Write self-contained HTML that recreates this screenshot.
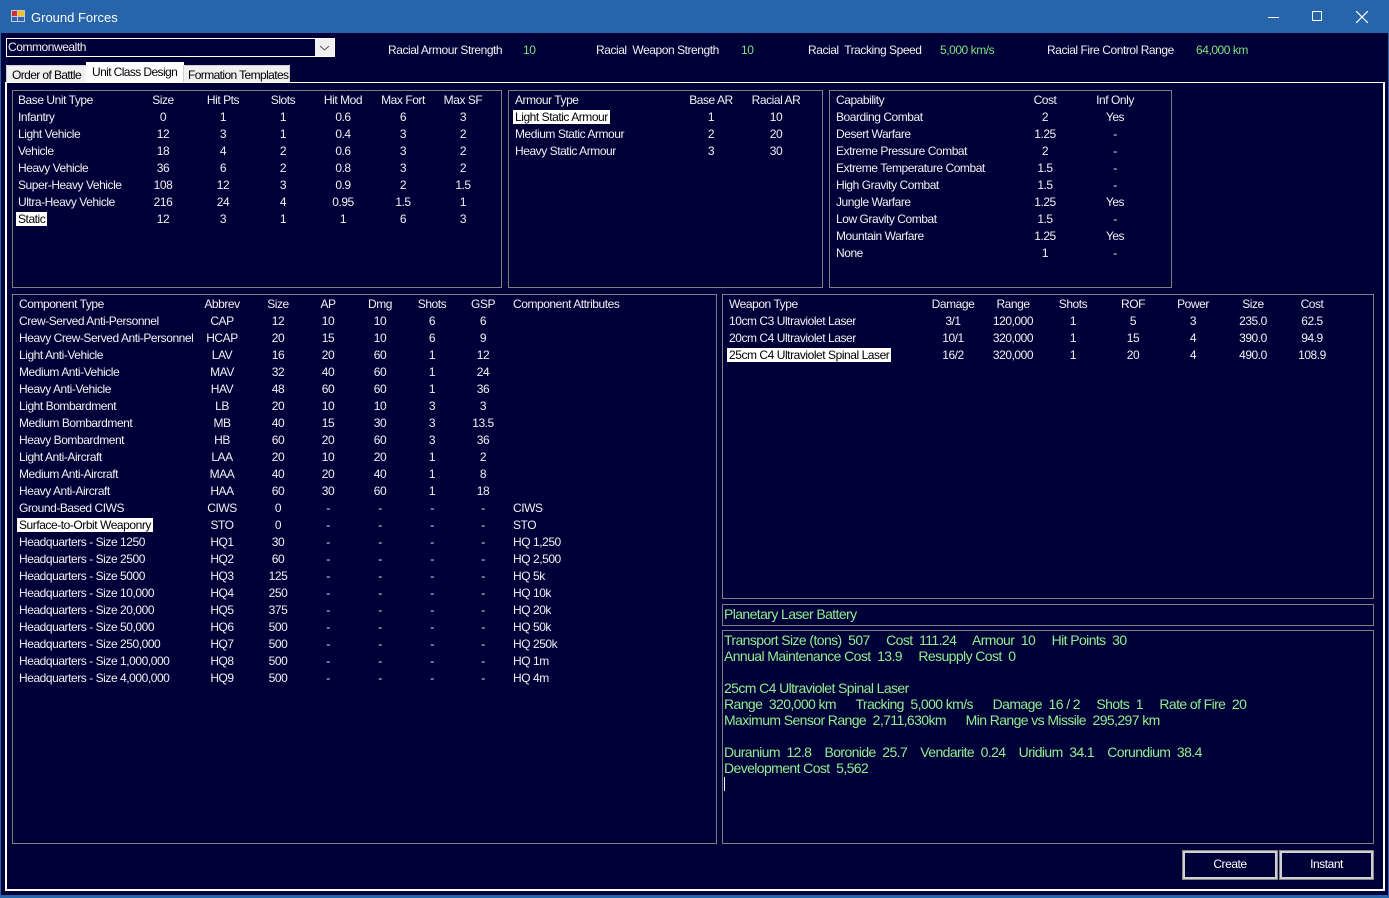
<!DOCTYPE html>
<html><head><meta charset="utf-8"><style>
*{margin:0;padding:0;box-sizing:border-box}
body{width:1389px;height:898px;background:#000038;font-family:"Liberation Sans",sans-serif;font-size:12px;color:#f0f0f0;position:relative;overflow:hidden;letter-spacing:-0.45px}
.a{position:absolute;white-space:nowrap}
.tb{left:0;top:0;width:1389px;height:33px;background:#2764a9;color:#fff;font-size:13px;letter-spacing:0}
.bord{left:0;top:0;width:1389px;height:898px;border:1px solid #2764a9;border-top:none;border-bottom:3px solid #2764a9}
.panel{border:1px solid #808080}
table{border-collapse:collapse;table-layout:fixed;position:absolute}
td{height:17px;padding:0;white-space:nowrap;text-align:center;line-height:17px}
td:first-child{text-align:left;padding-left:3px}
.sel{background:#fff;color:#000;padding:0 2px;margin-left:-2px}
.g{color:#7fe07f}
.info{color:#90ee90;font-size:14px;line-height:16px;letter-spacing:-0.6px;white-space:pre}
.btn{border:2px solid #d0d0d0;outline:1px solid #888;text-align:center;line-height:22px;color:#fff}
</style></head><body>
<div class="a bord"></div>
<div class="a tb">
 <div class="a" style="left:11px;top:10px;width:14px;height:12px;background:#c8c8c8"><div class="a" style="left:1px;top:1px;width:5px;height:5px;background:#d03030"></div><div class="a" style="left:7px;top:1px;width:6px;height:5px;background:#f0c020"></div><div class="a" style="left:1px;top:7px;width:5px;height:4px;background:#3060c0"></div><div class="a" style="left:7px;top:7px;width:6px;height:4px;background:#3060c0"></div></div>
 <div class="a" style="left:31px;top:10px">Ground Forces</div>
 <div class="a" style="left:1268px;top:17px;width:11px;height:1px;background:#fff"></div>
 <div class="a" style="left:1312px;top:11px;width:10px;height:10px;border:1px solid #fff"></div>
 <svg class="a" style="left:1356px;top:11px" width="12" height="12"><path d="M0 0L12 12M12 0L0 12" stroke="#fff" stroke-width="1.2"/></svg>
</div>
<div class="a" style="left:6px;top:38px;width:329px;height:19px;border:1px solid #fff;background:#000038"></div>
<div class="a" style="left:315px;top:39px;width:19px;height:17px;background:#f0f0f0"><svg width="19" height="17"><path d="M5 7L9.5 11L14 7" stroke="#555" fill="none"/></svg></div>
<div class="a" style="left:8px;top:40px">Commonwealth</div>
<div class="a" style="left:388px;top:43px">Racial Armour Strength</div><div class="a g" style="left:523px;top:43px">10</div>
<div class="a" style="left:596px;top:43px">Racial&nbsp; Weapon Strength</div><div class="a g" style="left:741px;top:43px">10</div>
<div class="a" style="left:808px;top:43px">Racial&nbsp; Tracking Speed</div><div class="a g" style="left:940px;top:43px">5,000 km/s</div>
<div class="a" style="left:1047px;top:43px">Racial Fire Control Range</div><div class="a g" style="left:1196px;top:43px">64,000 km</div>
<!-- tabs -->
<div class="a" style="left:6px;top:65px;width:81px;height:18px;background:#f0f0f0;border:1px solid #d0d0d0;color:#000;padding:2px 0 0 5px;letter-spacing:-0.6px">Order of Battle</div>
<div class="a" style="left:86px;top:62px;width:98px;height:21px;background:#fff;color:#000;padding:3px 0 0 6px;letter-spacing:-0.6px">Unit Class Design</div>
<div class="a" style="left:183px;top:65px;width:107px;height:18px;background:#f0f0f0;border:1px solid #d0d0d0;color:#000;padding:2px 0 0 4px;letter-spacing:-0.6px">Formation Templates</div>
<div class="a" style="left:5px;top:82px;width:1380px;height:809px;border:2px solid #fff;border-top:1px solid #fff"></div>
<!-- panels -->
<div class="a panel" style="left:12px;top:90px;width:490px;height:198px"></div>
<div class="a panel" style="left:508px;top:90px;width:315px;height:198px"></div>
<div class="a panel" style="left:829px;top:90px;width:343px;height:198px"></div>
<div class="a panel" style="left:12px;top:294px;width:705px;height:550px"></div>
<div class="a panel" style="left:722px;top:294px;width:652px;height:305px"></div>
<div class="a panel" style="left:722px;top:604px;width:652px;height:22px"></div>
<div class="a panel" style="left:722px;top:630px;width:652px;height:214px"></div>

<table style="left:15px;top:92px;width:478px"><colgroup><col style="width:118px"><col style="width:60px"><col style="width:60px"><col style="width:60px"><col style="width:60px"><col style="width:60px"><col style="width:60px"></colgroup>
<tr><td>Base Unit Type</td><td>Size</td><td>Hit Pts</td><td>Slots</td><td>Hit Mod</td><td>Max Fort</td><td>Max SF</td></tr>
<tr><td>Infantry</td><td>0</td><td>1</td><td>1</td><td>0.6</td><td>6</td><td>3</td></tr>
<tr><td>Light Vehicle</td><td>12</td><td>3</td><td>1</td><td>0.4</td><td>3</td><td>2</td></tr>
<tr><td>Vehicle</td><td>18</td><td>4</td><td>2</td><td>0.6</td><td>3</td><td>2</td></tr>
<tr><td>Heavy Vehicle</td><td>36</td><td>6</td><td>2</td><td>0.8</td><td>3</td><td>2</td></tr>
<tr><td>Super-Heavy Vehicle</td><td>108</td><td>12</td><td>3</td><td>0.9</td><td>2</td><td>1.5</td></tr>
<tr><td>Ultra-Heavy Vehicle</td><td>216</td><td>24</td><td>4</td><td>0.95</td><td>1.5</td><td>1</td></tr>
<tr><td><span class="sel">Static</span></td><td>12</td><td>3</td><td>1</td><td>1</td><td>6</td><td>3</td></tr>
</table>

<table style="left:512px;top:92px;width:299px"><colgroup><col style="width:169px"><col style="width:60px"><col style="width:70px"></colgroup>
<tr><td>Armour Type</td><td>Base AR</td><td>Racial AR</td></tr>
<tr><td><span class="sel">Light Static Armour</span></td><td>1</td><td>10</td></tr>
<tr><td>Medium Static Armour</td><td>2</td><td>20</td></tr>
<tr><td>Heavy Static Armour</td><td>3</td><td>30</td></tr>
</table>

<table style="left:833px;top:92px;width:312px"><colgroup><col style="width:172px"><col style="width:80px"><col style="width:60px"></colgroup>
<tr><td>Capability</td><td>Cost</td><td>Inf Only</td></tr>
<tr><td>Boarding Combat</td><td>2</td><td>Yes</td></tr>
<tr><td>Desert Warfare</td><td>1.25</td><td>-</td></tr>
<tr><td>Extreme Pressure Combat</td><td>2</td><td>-</td></tr>
<tr><td>Extreme Temperature Combat</td><td>1.5</td><td>-</td></tr>
<tr><td>High Gravity Combat</td><td>1.5</td><td>-</td></tr>
<tr><td>Jungle Warfare</td><td>1.25</td><td>Yes</td></tr>
<tr><td>Low Gravity Combat</td><td>1.5</td><td>-</td></tr>
<tr><td>Mountain Warfare</td><td>1.25</td><td>Yes</td></tr>
<tr><td>None</td><td>1</td><td>-</td></tr>
</table>

<table style="left:16px;top:296px;width:690px"><colgroup><col style="width:176px"><col style="width:60px"><col style="width:52px"><col style="width:48px"><col style="width:56px"><col style="width:48px"><col style="width:54px"><col style="width:196px"></colgroup>
<tr><td>Component Type</td><td>Abbrev</td><td>Size</td><td>AP</td><td>Dmg</td><td>Shots</td><td>GSP</td><td style="text-align:left;padding-left:3px">Component Attributes</td></tr>
<tr><td>Crew-Served Anti-Personnel</td><td>CAP</td><td>12</td><td>10</td><td>10</td><td>6</td><td>6</td><td></td></tr>
<tr><td>Heavy Crew-Served Anti-Personnel</td><td>HCAP</td><td>20</td><td>15</td><td>10</td><td>6</td><td>9</td><td></td></tr>
<tr><td>Light Anti-Vehicle</td><td>LAV</td><td>16</td><td>20</td><td>60</td><td>1</td><td>12</td><td></td></tr>
<tr><td>Medium Anti-Vehicle</td><td>MAV</td><td>32</td><td>40</td><td>60</td><td>1</td><td>24</td><td></td></tr>
<tr><td>Heavy Anti-Vehicle</td><td>HAV</td><td>48</td><td>60</td><td>60</td><td>1</td><td>36</td><td></td></tr>
<tr><td>Light Bombardment</td><td>LB</td><td>20</td><td>10</td><td>10</td><td>3</td><td>3</td><td></td></tr>
<tr><td>Medium Bombardment</td><td>MB</td><td>40</td><td>15</td><td>30</td><td>3</td><td>13.5</td><td></td></tr>
<tr><td>Heavy Bombardment</td><td>HB</td><td>60</td><td>20</td><td>60</td><td>3</td><td>36</td><td></td></tr>
<tr><td>Light Anti-Aircraft</td><td>LAA</td><td>20</td><td>10</td><td>20</td><td>1</td><td>2</td><td></td></tr>
<tr><td>Medium Anti-Aircraft</td><td>MAA</td><td>40</td><td>20</td><td>40</td><td>1</td><td>8</td><td></td></tr>
<tr><td>Heavy Anti-Aircraft</td><td>HAA</td><td>60</td><td>30</td><td>60</td><td>1</td><td>18</td><td></td></tr>
<tr><td>Ground-Based CIWS</td><td>CIWS</td><td>0</td><td>-</td><td>-</td><td>-</td><td>-</td><td style="text-align:left;padding-left:3px">CIWS</td></tr>
<tr><td><span class="sel">Surface-to-Orbit Weaponry</span></td><td>STO</td><td>0</td><td>-</td><td>-</td><td>-</td><td>-</td><td style="text-align:left;padding-left:3px">STO</td></tr>
<tr><td>Headquarters - Size 1250</td><td>HQ1</td><td>30</td><td>-</td><td>-</td><td>-</td><td>-</td><td style="text-align:left;padding-left:3px">HQ 1,250</td></tr>
<tr><td>Headquarters - Size 2500</td><td>HQ2</td><td>60</td><td>-</td><td>-</td><td>-</td><td>-</td><td style="text-align:left;padding-left:3px">HQ 2,500</td></tr>
<tr><td>Headquarters - Size 5000</td><td>HQ3</td><td>125</td><td>-</td><td>-</td><td>-</td><td>-</td><td style="text-align:left;padding-left:3px">HQ 5k</td></tr>
<tr><td>Headquarters - Size 10,000</td><td>HQ4</td><td>250</td><td>-</td><td>-</td><td>-</td><td>-</td><td style="text-align:left;padding-left:3px">HQ 10k</td></tr>
<tr><td>Headquarters - Size 20,000</td><td>HQ5</td><td>375</td><td>-</td><td>-</td><td>-</td><td>-</td><td style="text-align:left;padding-left:3px">HQ 20k</td></tr>
<tr><td>Headquarters - Size 50,000</td><td>HQ6</td><td>500</td><td>-</td><td>-</td><td>-</td><td>-</td><td style="text-align:left;padding-left:3px">HQ 50k</td></tr>
<tr><td>Headquarters - Size 250,000</td><td>HQ7</td><td>500</td><td>-</td><td>-</td><td>-</td><td>-</td><td style="text-align:left;padding-left:3px">HQ 250k</td></tr>
<tr><td>Headquarters - Size 1,000,000</td><td>HQ8</td><td>500</td><td>-</td><td>-</td><td>-</td><td>-</td><td style="text-align:left;padding-left:3px">HQ 1m</td></tr>
<tr><td>Headquarters - Size 4,000,000</td><td>HQ9</td><td>500</td><td>-</td><td>-</td><td>-</td><td>-</td><td style="text-align:left;padding-left:3px">HQ 4m</td></tr>
</table>

<table style="left:726px;top:296px;width:615px"><colgroup><col style="width:197px"><col style="width:60px"><col style="width:60px"><col style="width:60px"><col style="width:60px"><col style="width:60px"><col style="width:60px"><col style="width:58px"></colgroup>
<tr><td>Weapon Type</td><td>Damage</td><td>Range</td><td>Shots</td><td>ROF</td><td>Power</td><td>Size</td><td>Cost</td></tr>
<tr><td>10cm C3 Ultraviolet Laser</td><td>3/1</td><td>120,000</td><td>1</td><td>5</td><td>3</td><td>235.0</td><td>62.5</td></tr>
<tr><td>20cm C4 Ultraviolet Laser</td><td>10/1</td><td>320,000</td><td>1</td><td>15</td><td>4</td><td>390.0</td><td>94.9</td></tr>
<tr><td><span class="sel">25cm C4 Ultraviolet Spinal Laser</span></td><td>16/2</td><td>320,000</td><td>1</td><td>20</td><td>4</td><td>490.0</td><td>108.9</td></tr>
</table>

<div class="a info" style="left:724px;top:606px">Planetary Laser Battery</div>
<div class="a info" style="left:724px;top:632px">Transport Size (tons)  507     Cost  111.24     Armour  10     Hit Points  30
Annual Maintenance Cost  13.9     Resupply Cost  0

25cm C4 Ultraviolet Spinal Laser
Range  320,000 km      Tracking  5,000 km/s      Damage  16 / 2     Shots  1     Rate of Fire  20
Maximum Sensor Range  2,711,630km      Min Range vs Missile  295,297 km

Duranium  12.8    Boronide  25.7    Vendarite  0.24    Uridium  34.1    Corundium  38.4
Development Cost  5,562</div>
<div class="a" style="left:724px;top:777px;width:1px;height:14px;background:#fff"></div>
<div class="a btn" style="left:1183px;top:851px;width:94px;height:28px">Create</div>
<div class="a btn" style="left:1280px;top:851px;width:93px;height:28px">Instant</div>
</body></html>
